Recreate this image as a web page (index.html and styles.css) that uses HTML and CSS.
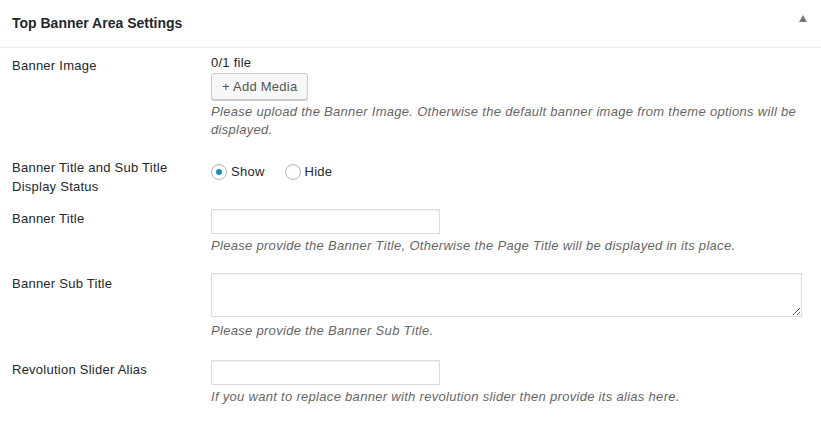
FILE: index.html
```html
<!DOCTYPE html>
<html>
<head>
<meta charset="utf-8">
<link rel="stylesheet" href="styles.css">
</head>
<body>
<div class="postbox">
  <div class="postbox-header">
    <h2 class="postbox-title">Top Banner Area Settings</h2>
    <span class="toggle-arrow"></span>
  </div>
  <div class="inside">
    <div class="row row-image">
      <div class="label label-image">Banner Image</div>
      <div class="field">
        <div class="file-count">0/1 file</div>
        <button class="button">+ Add Media</button>
        <p class="desc desc-image">Please upload the Banner Image. Otherwise the default banner image from theme options will be displayed.</p>
      </div>
    </div>
    <div class="row row-status">
      <div class="label label-status">Banner Title and Sub Title Display Status</div>
      <div class="field field-radios">
        <label class="radio"><span class="radio-dot checked"></span>Show</label>
        <label class="radio"><span class="radio-dot"></span>Hide</label>
      </div>
    </div>
    <div class="row">
      <div class="label">Banner Title</div>
      <div class="field">
        <input class="text-input" type="text">
        <p class="desc">Please provide the Banner Title, Otherwise the Page Title will be displayed in its place.</p>
      </div>
    </div>
    <div class="row">
      <div class="label">Banner Sub Title</div>
      <div class="field">
        <textarea class="textarea"></textarea>
        <p class="desc desc-textarea">Please provide the Banner Sub Title.</p>
      </div>
    </div>
    <div class="row row-last">
      <div class="label">Revolution Slider Alias</div>
      <div class="field">
        <input class="text-input" type="text">
        <p class="desc">If you want to replace banner with revolution slider then provide its alias here.</p>
      </div>
    </div>
  </div>
</div>
</body>
</html>
```

FILE: styles.css
```css
html, body {
  margin: 0;
  padding: 0;
  background: #ffffff;
}
body {
  font-family: "Liberation Sans", Arial, sans-serif;
  font-size: 13px;
  color: #23282d;
  letter-spacing: 0.25px;
}
.postbox {
  width: 821px;
  height: 421px;
  background: #fff;
  overflow: hidden;
}
.postbox-header {
  height: 47px;
  border-bottom: 1px solid #eeeeee;
  display: flex;
  align-items: center;
  justify-content: space-between;
  padding: 0 14px 0 12px;
  box-sizing: content-box;
}
.postbox-title {
  margin: 0;
  font-size: 14px;
  font-weight: bold;
  color: #23282d;
  line-height: 20px;
  padding-bottom: 2px;
  letter-spacing: 0;
}
.toggle-arrow {
  width: 0;
  height: 0;
  border-left: 4px solid transparent;
  border-right: 4px solid transparent;
  border-bottom: 7px solid #72777c;
  margin-bottom: 10px;
}
.inside {
  padding: 6px 19px 0 12px;
  display: flex;
  flex-direction: column;
  gap: 19px;
}
.row {
  display: flex;
  align-items: flex-start;
}
.label {
  width: 199px;
  flex: none;
  line-height: 18px;
  padding-top: 1px;
}
.label-image {
  padding-top: 3px;
}
.label-status {
  line-height: 19px;
  padding-top: 0;
  width: 170px;
  margin-right: 29px;
}
.row-status {
  margin-bottom: -6px;
}
.field {
  flex: 1;
  min-width: 0;
  line-height: 18px;
}
.file-count {
  line-height: 18px;
}
.button {
  display: block;
  margin-top: 1px;
  height: 27px;
  padding: 0 10px;
  font-family: "Liberation Sans", Arial, sans-serif;
  font-size: 13px;
  letter-spacing: 0.25px;
  color: #555;
  background: #f7f7f7;
  border: 1px solid #cccccc;
  border-radius: 3px;
  box-shadow: 0 1px 0 #cccccc;
  line-height: 25px;
}
.desc {
  margin: 3px 0 0;
  font-style: italic;
  color: #666;
  line-height: 18px;
  letter-spacing: 0.3px;
}
.desc-image {
  margin-top: 3px;
}
.field-radios {
  display: flex;
  gap: 20px;
  padding-top: 5px;
}
.radio {
  display: flex;
  align-items: center;
  gap: 4px;
  line-height: 18px;
}
.radio-dot {
  width: 14px;
  height: 14px;
  border: 1px solid #b4b9be;
  border-radius: 50%;
  background: #fff;
  box-shadow: inset 0 1px 2px rgba(0,0,0,0.07);
  display: flex;
  align-items: center;
  justify-content: center;
}
.radio-dot.checked::after {
  content: "";
  width: 6px;
  height: 6px;
  border-radius: 50%;
  background: #1e8cbe;
}
.text-input {
  display: block;
  width: 229px;
  height: 25px;
  box-sizing: border-box;
  margin: 0;
  border: 1px solid #dddddd;
  box-shadow: inset 0 1px 2px rgba(0,0,0,0.07);
  background: #fff;
  padding: 2px 5px;
  font-size: 13px;
}
.textarea {
  display: block;
  width: 100%;
  height: 44px;
  box-sizing: border-box;
  margin: -1px 0 0;
  border: 1px solid #dddddd;
  box-shadow: inset 0 1px 2px rgba(0,0,0,0.07);
  background: #fff;
  padding: 2px 6px;
  font-size: 13px;
  resize: vertical;
}
.desc-textarea {
  margin-top: 5px;
}
.row-last {
  margin-top: 1px;
}
```
